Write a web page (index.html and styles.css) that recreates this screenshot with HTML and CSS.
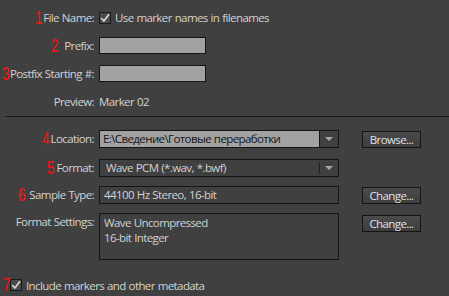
FILE: index.html
```html
<!DOCTYPE html>
<html>
<head>
<meta charset="utf-8">
<link rel="stylesheet" href="styles.css">
</head>
<body>
<div class="dialog">
  <div class="top">
    <div class="lbl"><span class="num n1">1</span>File Name:</div>
    <div class="ctl">
      <span class="check"><span class="box"><svg width="10" height="10" viewBox="0 0 10 10"><path d="M1.2 5.2 L3.9 8 L9 1.2" fill="none" stroke="#d6d6d6" stroke-width="1.7"/></svg></span>Use marker names in filenames</span>
    </div>
    <div class="lbl"><span class="num n2">2</span>Prefix:</div>
    <div class="ctl"><div class="field"></div></div>
    <div class="lbl"><span class="num n3">3</span>Postfix Starting #:</div>
    <div class="ctl"><div class="field"></div></div>
    <div class="lbl">Preview:</div>
    <div class="ctl">Marker 02</div>
  </div>
  <div class="sep"></div>
  <div class="row r-loc">
    <div class="lbl"><span class="num n4">4</span>Location:</div>
    <div class="combo combo-edit">
      <div class="combo-text">E:\Сведение\Готовые переработки</div>
      <div class="combo-arrow"><span class="tri"></span></div>
    </div>
    <div class="btn">Browse...</div>
  </div>
  <div class="row r-fmt">
    <div class="lbl"><span class="num n5">5</span>Format:</div>
    <div class="combo combo-drop">
      <div class="combo-text">Wave PCM (*.wav, *.bwf)</div>
      <div class="combo-div"></div>
      <div class="combo-arrow"><span class="tri"></span></div>
    </div>
    <div></div>
  </div>
  <div class="row r-smp">
    <div class="lbl"><span class="num n6">6</span>Sample Type:</div>
    <div class="box-field">44100 Hz Stereo, 16-bit</div>
    <div class="btn">Change...</div>
  </div>
  <div class="row r-fs">
    <div class="lbl">Format Settings:</div>
    <div class="box-field multi">Wave Uncompressed<br>16-bit Integer</div>
    <div class="btn">Change...</div>
  </div>
  <div class="include">
    <span class="num n7">7</span><span class="check"><span class="box"><svg width="10" height="10" viewBox="0 0 10 10"><path d="M1.2 5.2 L3.9 8 L9 1.2" fill="none" stroke="#d6d6d6" stroke-width="1.7"/></svg></span>Include markers and other metadata</span>
  </div>
</div>
</body>
</html>
```
FILE: styles.css
```css
html, body {
  margin: 0;
  padding: 0;
}
body {
  background: #404040;
  width: 449px;
  height: 296px;
  overflow: hidden;
  font-family: "Open Sans", "Noto Sans", sans-serif;
  font-size: 11.5px;
  letter-spacing: -0.6px;
  word-spacing: 0.5px;
  color: #d2d2d2;
}
.dialog {
  display: flex;
  flex-direction: column;
}
.top {
  display: grid;
  grid-template-columns: 94px auto;
  column-gap: 5px;
  row-gap: 11px;
  grid-auto-rows: 17px;
  padding-top: 9px;
  align-items: center;
}
.lbl {
  text-align: right;
  white-space: nowrap;
  line-height: 17px;
}
.ctl {
  display: flex;
  align-items: center;
  white-space: nowrap;
}
.num {
  display: inline-block;
  width: 8px;
  text-align: center;
  color: #ff1010;
  font-family: "Liberation Sans", sans-serif;
  font-size: 18px;
  letter-spacing: 0;
  line-height: 17px;
  vertical-align: -2px;
  transform: scaleX(0.75);
}
.n1 { margin-right: 1px; }
.n2 { margin-right: 6px; }
.n3 { margin-right: 1px; }
.n4 { margin-right: 2px; }
.n5 { margin-right: 2px; }
.n6 { margin-right: 4px; }
.check {
  display: inline-flex;
  align-items: center;
  white-space: nowrap;
}
.box {
  width: 12px;
  height: 12px;
  box-sizing: border-box;
  border: 1px solid #1a1a1a;
  background: #4a4a4a;
  display: inline-flex;
  align-items: center;
  justify-content: center;
  margin-right: 4px;
}
.field {
  width: 107px;
  height: 17px;
  box-sizing: border-box;
  border: 1px solid #151515;
  background: #a2a2a2;
}
.sep {
  height: 1px;
  background: #1c1c1c;
  margin: 6px 0 0 5px;
}
.row {
  display: grid;
  grid-template-columns: 94px 240px 77px;
  column-gap: 5px;
  align-items: center;
}
.row .btn { margin-left: 18px; }
.r-loc { margin-top: 13px; height: 18px; }
.r-fmt { margin-top: 11px; height: 18px; }
.r-smp { margin-top: 9px; height: 18px; }
.r-fs { margin-top: 9px; height: 47px; align-items: start; }
.r-fs .lbl { margin-top: 0; line-height: 17px; }
.r-fs .btn { margin-top: 2px; }
.combo {
  height: 18px;
  box-sizing: border-box;
  border: 1px solid #151515;
  display: flex;
  align-items: stretch;
}
.combo-text {
  flex: 1;
  line-height: 16px;
  white-space: nowrap;
  overflow: hidden;
}
.combo-edit .combo-text {
  background: #a2a2a2;
  color: #141414;
  padding-left: 3px;
  border-right: 1px solid #151515;
}
.combo-drop .combo-text {
  padding-left: 6px;
}
.combo-div {
  width: 1px;
  background: #232323;
  margin: 2px 0;
}
.combo-arrow {
  width: 18px;
  display: flex;
  align-items: center;
  justify-content: center;
}
.tri {
  width: 0;
  height: 0;
  border-left: 4px solid transparent;
  border-right: 4px solid transparent;
  border-top: 4px solid #a6a6a6;
}
.btn {
  height: 17px;
  box-sizing: border-box;
  border: 1px solid #141414;
  background: linear-gradient(#4b4b4b, #3d3d3d);
  color: #dde2ea;
  text-align: center;
  line-height: 15px;
  white-space: nowrap;
}
.box-field {
  height: 18px;
  box-sizing: border-box;
  border: 1px solid #151515;
  padding-left: 4px;
  line-height: 16px;
  white-space: nowrap;
}
.box-field.multi {
  height: 47px;
  line-height: 15px;
  padding-top: 1px;
}
.include {
  margin-top: 18px;
  display: flex;
  align-items: center;
  height: 14px;
  padding-left: 2px;
}
.n7 {
  margin-right: 0;
}
```
